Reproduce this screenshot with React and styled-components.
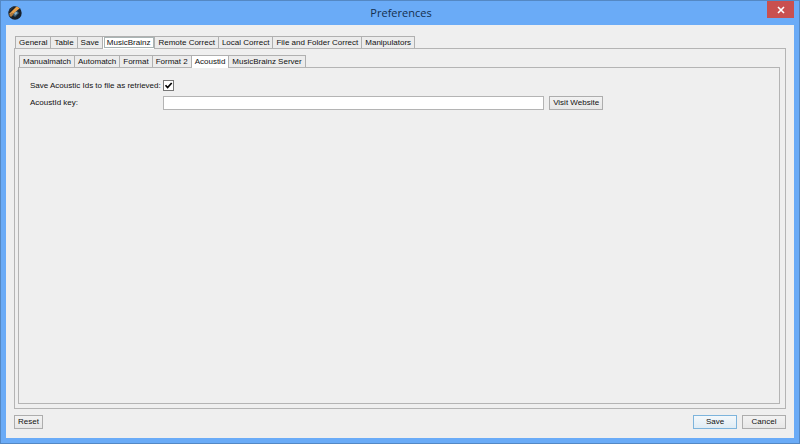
import React, { useState } from 'react';
import styled, { createGlobalStyle, css } from 'styled-components';

const GlobalStyle = createGlobalStyle`
  * {
    box-sizing: border-box;
  }

  body {
    margin: 0;
    font-family: "Liberation Sans", Arial, sans-serif;
    font-size: 8px;
    line-height: 10px;
    color: #111;
  }

  button, input {
    font: inherit;
    color: inherit;
  }
`;

const mainTabs = [
  'General',
  'Table',
  'Save',
  'MusicBrainz',
  'Remote Correct',
  'Local Correct',
  'File and Folder Correct',
  'Manipulators',
];

const musicBrainzTabs = [
  'Manualmatch',
  'Automatch',
  'Format',
  'Format 2',
  'Acoustid',
  'MusicBrainz Server',
];

// Application icon in the title bar
const AppIcon = () => (
  <svg width="14" height="14" viewBox="0 0 14 14" aria-hidden="true">
    <defs>
      <clipPath id="disc">
        <circle cx="7" cy="7" r="6.7" />
      </clipPath>
    </defs>
    <g clipPath="url(#disc)">
      <rect width="14" height="14" fill="#17202b" />
      <path d="M0 5L5 0L7 0L0 7Z" fill="#2a3440" />
      <path d="M1 8L9 0L12 2L4 9Z" fill="#e8a04a" />
      <path d="M1 9L4 6.5L6 8L3 11Z" fill="#b07a3e" />
      <path d="M5 9L9 5L11 7L7 11Z" fill="#3d6480" />
      <path d="M6 7.5L8 5.5L9.5 7L7.5 9Z" fill="#8fb2c8" />
    </g>
  </svg>
);

const Preferences = () => {
  const [mainTab, setMainTab] = useState('MusicBrainz');
  const [subTab, setSubTab] = useState('Acoustid');
  const [saveIds, setSaveIds] = useState(true);
  const [apiKey, setApiKey] = useState('');

  return (
    <Window>
      <GlobalStyle />
      <TitleBar>
        <AppIcon />
        <Title>Preferences</Title>
        <CloseButton aria-label="Close">
          <svg width="8" height="8" viewBox="0 0 8 8" aria-hidden="true">
            <path d="M1 1L7 7M7 1L1 7" stroke="#fff" strokeWidth="1.6" />
          </svg>
        </CloseButton>
      </TitleBar>
      <Content>
        <TabBar role="tablist">
          {mainTabs.map((name) => (
            <Tab
              key={name}
              role="tab"
              aria-selected={name === mainTab}
              $selected={name === mainTab}
              $focused={name === mainTab}
              onClick={() => setMainTab(name)}
            >
              {name}
            </Tab>
          ))}
        </TabBar>
        <OuterPanel>
          <TabBar role="tablist">
            {musicBrainzTabs.map((name) => (
              <Tab
                key={name}
                role="tab"
                aria-selected={name === subTab}
                $selected={name === subTab}
                onClick={() => setSubTab(name)}
              >
                {name}
              </Tab>
            ))}
          </TabBar>
          <InnerPanel role="tabpanel">
            <Form>
              <Label htmlFor="save-ids">Save Acoustic Ids to file as retrieved:</Label>
              <CheckBox
                id="save-ids"
                type="checkbox"
                checked={saveIds}
                onChange={(e) => setSaveIds(e.target.checked)}
              />
              <Label htmlFor="acoustid-key">AcoustId key:</Label>
              <KeyRow>
                <KeyInput
                  id="acoustid-key"
                  type="text"
                  value={apiKey}
                  onChange={(e) => setApiKey(e.target.value)}
                />
                <Button type="button">Visit Website</Button>
              </KeyRow>
            </Form>
          </InnerPanel>
        </OuterPanel>
        <Footer>
          <Button>Reset</Button>
          <Actions>
            <Button $wide $primary>Save</Button>
            <Button $wide>Cancel</Button>
          </Actions>
        </Footer>
      </Content>
    </Window>
  );
};

// Styled Components
const Window = styled.div`
  display: flex;
  flex-direction: column;
  min-height: 100vh;
  padding: 0 5px 5px;
  background: #6aabf7;
  border: 1px solid #5488c4;
`;

const TitleBar = styled.header`
  display: grid;
  grid-template-columns: 30px 1fr 30px;
  align-items: center;
  height: 24px;
  padding-left: 2px;
`;

const Title = styled.h1`
  margin: 0;
  font-family: "Open Sans", "Noto Sans", sans-serif;
  font-size: 11px;
  font-weight: 400;
  line-height: 24px;
  text-align: center;
  color: #14304f;
`;

const CloseButton = styled.button`
  display: flex;
  align-items: center;
  justify-content: center;
  align-self: start;
  justify-self: end;
  width: 27px;
  height: 17px;
  padding: 0;
  border: none;
  background: #c9504f;
`;

const Content = styled.main`
  flex: 1;
  display: flex;
  flex-direction: column;
  padding: 11px 8px 9px;
  background: #efefef;
`;

const TabBar = styled.div`
  display: flex;
  padding-left: 1px;
`;

const Tab = styled.button`
  height: 12px;
  padding: 0 3px;
  border: 1px solid #b0b0b0;
  border-left-width: 0;
  border-bottom: none;
  background: #ececec;
  white-space: nowrap;

  &:first-child {
    border-left-width: 1px;
  }

  ${({ $selected }) => $selected && css`
    position: relative;
    height: 13px;
    margin-bottom: -1px;
    background: #fff;
  `}

  ${({ $focused }) => $focused && css`
    padding: 0 4px;
    outline: 1px solid #a9b4b4;
    outline-offset: -2px;
  `}
`;

const OuterPanel = styled.section`
  flex: 1;
  display: flex;
  flex-direction: column;
  padding: 6px 5px 4px 3px;
  border: 1px solid #b4b4b4;
`;

const InnerPanel = styled.section`
  flex: 1;
  padding: 12px 11px;
  border: 1px solid #b4b4b4;
`;

const Form = styled.form`
  display: grid;
  grid-template-columns: 128px 1fr;
  align-items: center;
  gap: 5px;
`;

const Label = styled.label`
  white-space: nowrap;
`;

const CheckBox = styled.input`
  appearance: none;
  width: 11px;
  height: 11px;
  margin: 0;
  border: 1px solid #777;
  background: #fff;

  &:checked {
    background: #fff url("data:image/svg+xml,%3Csvg xmlns='http://www.w3.org/2000/svg' viewBox='0 0 9 9'%3E%3Cpath d='M1.5 4.2L3.6 6.5L7.7 2' fill='none' stroke='%23000' stroke-width='1.7'/%3E%3C/svg%3E");
  }
`;

const KeyRow = styled.div`
  display: flex;
  align-items: center;
  gap: 5px;
`;

const KeyInput = styled.input`
  flex: 0 0 63%;
  height: 14px;
  padding: 0 2px;
  border: 1px solid #b4b4b4;
  background: #fff;
`;

const Button = styled.button`
  height: 14px;
  min-width: ${({ $wide }) => ($wide ? '44px' : '0')};
  padding: 0 3px;
  border: 1px solid ${({ $primary }) => ($primary ? '#7db4dc' : '#adadad')};
  background: ${({ $primary }) =>
    $primary ? 'linear-gradient(#f4f8fb, #dfecf5)' : 'linear-gradient(#f2f2f2, #e7e7e7)'};
  white-space: nowrap;
`;

const Footer = styled.footer`
  display: flex;
  justify-content: space-between;
  padding-top: 6px;
`;

const Actions = styled.div`
  display: flex;
  gap: 5px;
`;

export default Preferences;
